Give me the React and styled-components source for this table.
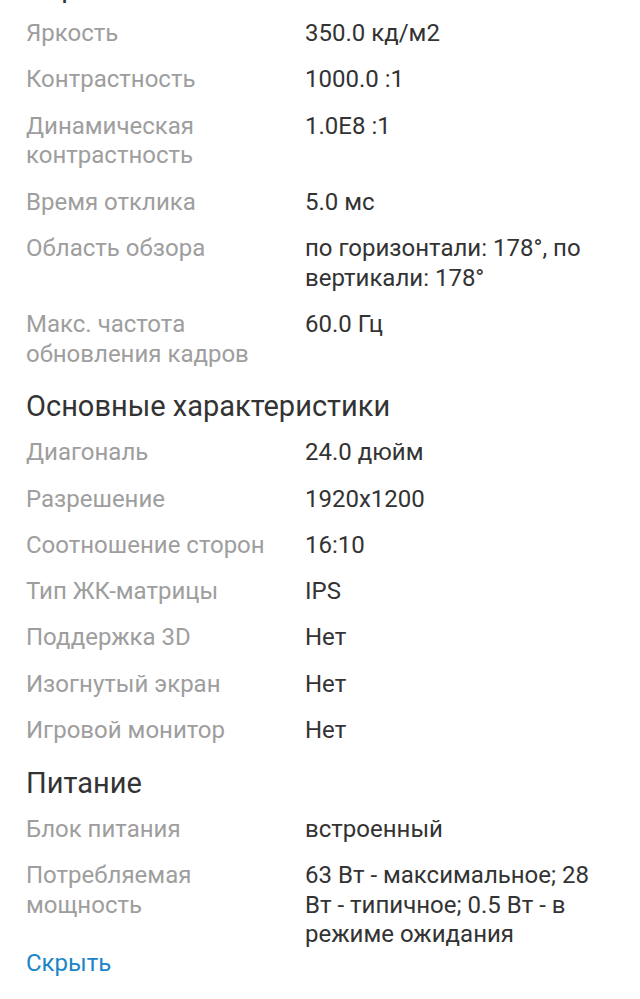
import React from "react";
import styled, { createGlobalStyle } from "styled-components";

const Global = createGlobalStyle`
  html, body { margin: 0; padding: 0; background: #ffffff; }
  body { font-family: Roboto, "Noto Sans", Arial, sans-serif; overflow: hidden; }
`;

const Page = styled.div`
  padding: 0 26px;
  width: 640px;
  box-sizing: border-box;
  height: 999px;
  overflow: hidden;
`;

const Heading = styled.h2`
  margin: ${(p) => (p.$first ? "-29px" : "21px")} 0 16px;
  font-size: 29px;
  line-height: 32px;
  font-weight: 400;
  color: #333333;
`;

const List = styled.div`
  display: flex;
  flex-direction: column;
  gap: 16.6px;
`;

const Row = styled.div`
  display: grid;
  grid-template-columns: 279px 1fr;
  font-size: 24px;
  line-height: 29.7px;
`;

const Label = styled.div`
  color: #9e9e9e;
  padding-right: 12px;
`;

const Value = styled.div`
  color: #333333;
`;

const HideLink = styled.a`
  display: block;
  margin-top: -1px;
  font-size: 24px;
  line-height: 29.7px;
  color: #1a86c9;
  text-decoration: none;
  cursor: pointer;
`;

const sections = [
  {
    title: "Экран",
    rows: [
      ["Яркость", "350.0 кд/м2"],
      ["Контрастность", "1000.0 :1"],
      ["Динамическая контрастность", "1.0E8 :1"],
      ["Время отклика", "5.0 мс"],
      ["Область обзора", "по горизонтали: 178°, по вертикали: 178°"],
      ["Макс. частота обновления кадров", "60.0 Гц"],
    ],
  },
  {
    title: "Основные характеристики",
    rows: [
      ["Диагональ", "24.0 дюйм"],
      ["Разрешение", "1920x1200"],
      ["Соотношение сторон", "16:10"],
      ["Тип ЖК-матрицы", "IPS"],
      ["Поддержка 3D", "Нет"],
      ["Изогнутый экран", "Нет"],
      ["Игровой монитор", "Нет"],
    ],
  },
  {
    title: "Питание",
    rows: [
      ["Блок питания", "встроенный"],
      [
        "Потребляемая мощность",
        "63 Вт - максимальное; 28 Вт - типичное; 0.5 Вт - в режиме ожидания",
      ],
    ],
  },
];

export default function App() {
  return (
    <>
      <Global />
      <Page>
        {sections.map((s, i) => (
          <section key={s.title}>
            <Heading $first={i === 0}>{s.title}</Heading>
            <List>
              {s.rows.map(([l, v]) => (
                <Row key={l}>
                  <Label>{l}</Label>
                  <Value>{v}</Value>
                </Row>
              ))}
            </List>
          </section>
        ))}
        <HideLink>Скрыть</HideLink>
      </Page>
    </>
  );
}
